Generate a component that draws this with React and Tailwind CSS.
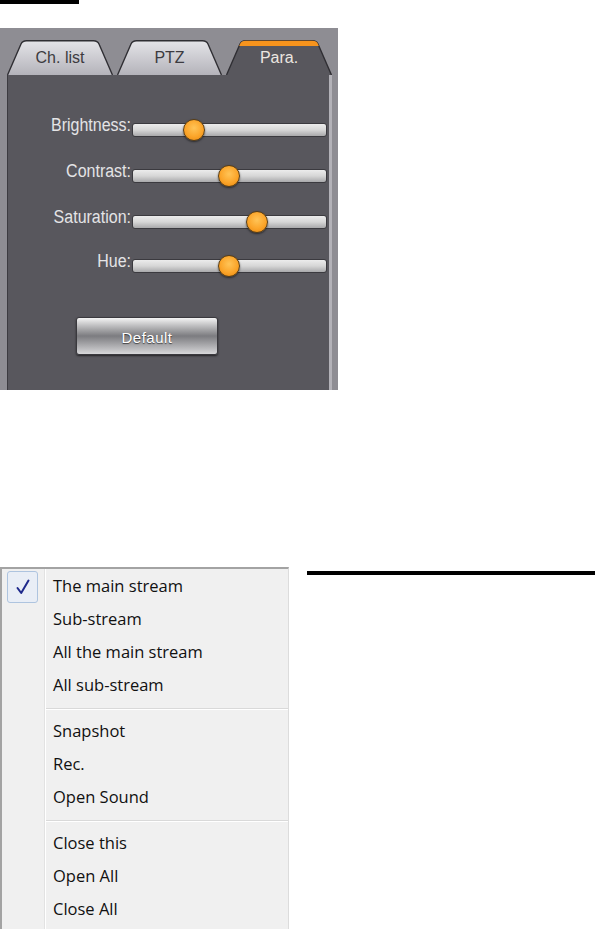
const tabs = [
  { label: "Ch. list", w: 106, active: false },
  { label: "PTZ", w: 105, active: false },
  { label: "Para.", w: 106, active: true },
];

const sliders = [
  { label: "Brightness:", pos: 61, mt: 0 },
  { label: "Contrast:", pos: 96, mt: 24 },
  { label: "Saturation:", pos: 124, mt: 24 },
  { label: "Hue:", pos: 96, mt: 22 },
];

const menuGroups = [
  ["The main stream", "Sub-stream", "All the main stream", "All sub-stream"],
  ["Snapshot", "Rec.", "Open Sound"],
  ["Close this", "Open All", "Close All"],
];

const Tab = ({ label, w, active }) => (
  <div className="relative h-[35px] flex items-center justify-center" style={{ width: w }}>
    <svg className="absolute inset-0" width={w} height="35" viewBox={`0 0 ${w} 35`}>
      <defs>
        <linearGradient id="tabIdle" x1="0" y1="0" x2="0" y2="1">
          <stop offset="0" stopColor="#e4e4e8" />
          <stop offset="1" stopColor="#b4b3ba" />
        </linearGradient>
      </defs>
      <path
        d={`M0.5 35 L14 4 Q15.5 0.8 19.5 0.8 L${w - 19.5} 0.8 Q${w - 15.5} 0.8 ${w - 14} 4 L${w - 0.5} 35`}
        fill={active ? "#58575d" : "url(#tabIdle)"}
        stroke="#2f2e33"
        strokeWidth="1.4"
      />
      {active && (
        <path
          d={`M13.2 6 L14 4 Q15.5 0.8 19.5 0.8 L${w - 19.5} 0.8 Q${w - 15.5} 0.8 ${w - 14} 4 L${w - 13.2} 6 Z`}
          fill="#f7941d"
        />
      )}
    </svg>
    <span
      className={`relative text-[16px] font-['Liberation_Sans',Arial,sans-serif] ${
        active ? "text-[#ece6e0]" : "text-[#3c3b40]"
      }`}
    >
      {label}
    </span>
  </div>
);

const SliderRow = ({ label, pos, mt }) => (
  <div className="flex items-center h-[22px]" style={{ marginTop: mt }}>
    <div className="w-[124px] text-right -mt-[9px] pr-[1px] text-[16px] leading-none text-[#e4e4e6] font-['Liberation_Sans',Arial,sans-serif] scale-y-110">
      {label}
    </div>
    <div className="relative w-[195px] h-[14px] rounded-[3px] bg-gradient-to-b from-[#ececec] via-[#d6d6d6] to-[#a9a9ab] border border-[#3b3a3f]">
      <div
        className="absolute top-1/2 w-[22px] h-[22px] -translate-x-1/2 -translate-y-1/2 rounded-full border-[1.5px] border-[#5a3d12] bg-[radial-gradient(circle_at_50%_40%,#ffc457_0%,#fba52a_55%,#e8860d_100%)] shadow-[0_1px_2px_rgba(0,0,0,0.5)]"
        style={{ left: pos }}
      />
    </div>
  </div>
);

const App = () => {
  return (
    <div className="w-[595px] h-[929px] bg-white overflow-hidden">
      <div className="w-[79px] h-[4px] bg-black" />

      <div className="mt-[24px] w-[338px] h-[362px] bg-[#8e8d93] pt-[12px]">
        <div className="flex pl-[7px] gap-[4px]">
          {tabs.map((t) => (
            <Tab key={t.label} {...t} />
          ))}
        </div>
        <div className="ml-[7px] w-[325px] h-[315px] bg-[#58575d] border-l border-[#3c3b40] border-r-[3px] border-r-[#b3b2b8] pt-[44px]">
          {sliders.map((s) => (
            <SliderRow key={s.label} {...s} />
          ))}
          <button className="mt-[40px] ml-[68px] w-[142px] h-[38px] pt-[4px] rounded-[3px] border border-[#3a393e] bg-gradient-to-b from-[#f4f4f4] via-[#7c7c80] to-[#d8d8da] shadow-[0_1px_2px_rgba(0,0,0,0.6)] text-white text-[15px] tracking-[0.5px] font-['Liberation_Sans',Arial,sans-serif] [text-shadow:0_1px_1px_rgba(0,0,0,0.6)]">
            Default
          </button>
        </div>
      </div>

      <div className="mt-[177px] flex items-start">
        <div className="relative w-[289px] h-[362px] bg-[#f0f0f0] border-t-2 border-l-2 border-[#a3a3a3] border-r border-r-[#dcdcdc] pt-[1px] font-['Open_Sans','Noto_Sans',sans-serif] text-[16.5px] text-[#111111]">
          <div className="absolute top-0 bottom-0 left-[42px] w-[2px] border-l border-[#e2e2e2] bg-white" />
          {menuGroups.map((group, gi) => (
            <div key={gi}>
              {gi > 0 && (
                <div className="h-[13px] flex items-center pl-[44px]">
                  <div className="w-full h-[2px] border-t border-[#d9d9d9] bg-white" />
                </div>
              )}
              {group.map((item, ii) => (
                <div key={item} className="relative h-[33px] flex items-center">
                  <div className="w-[44px] flex justify-center">
                    {gi === 0 && ii === 0 && (
                      <div className="-ml-[3px] w-[31px] h-[32px] rounded-[3px] border border-[#aec4df] bg-[#e9eef6] flex items-center justify-center">
                        <svg width="14" height="16" viewBox="0 0 14 16">
                          <path
                            d="M1.5 9 L5.2 14 L12.5 1.5"
                            fill="none"
                            stroke="#1f2a8c"
                            strokeWidth="2"
                            strokeLinecap="round"
                            strokeLinejoin="round"
                          />
                        </svg>
                      </div>
                    )}
                  </div>
                  <span className="ml-[7px]">{item}</span>
                </div>
              ))}
            </div>
          ))}
        </div>
        <div className="ml-[18px] mt-[4px] flex-1 h-[4px] bg-black" />
      </div>
    </div>
  );
};

export default App;
